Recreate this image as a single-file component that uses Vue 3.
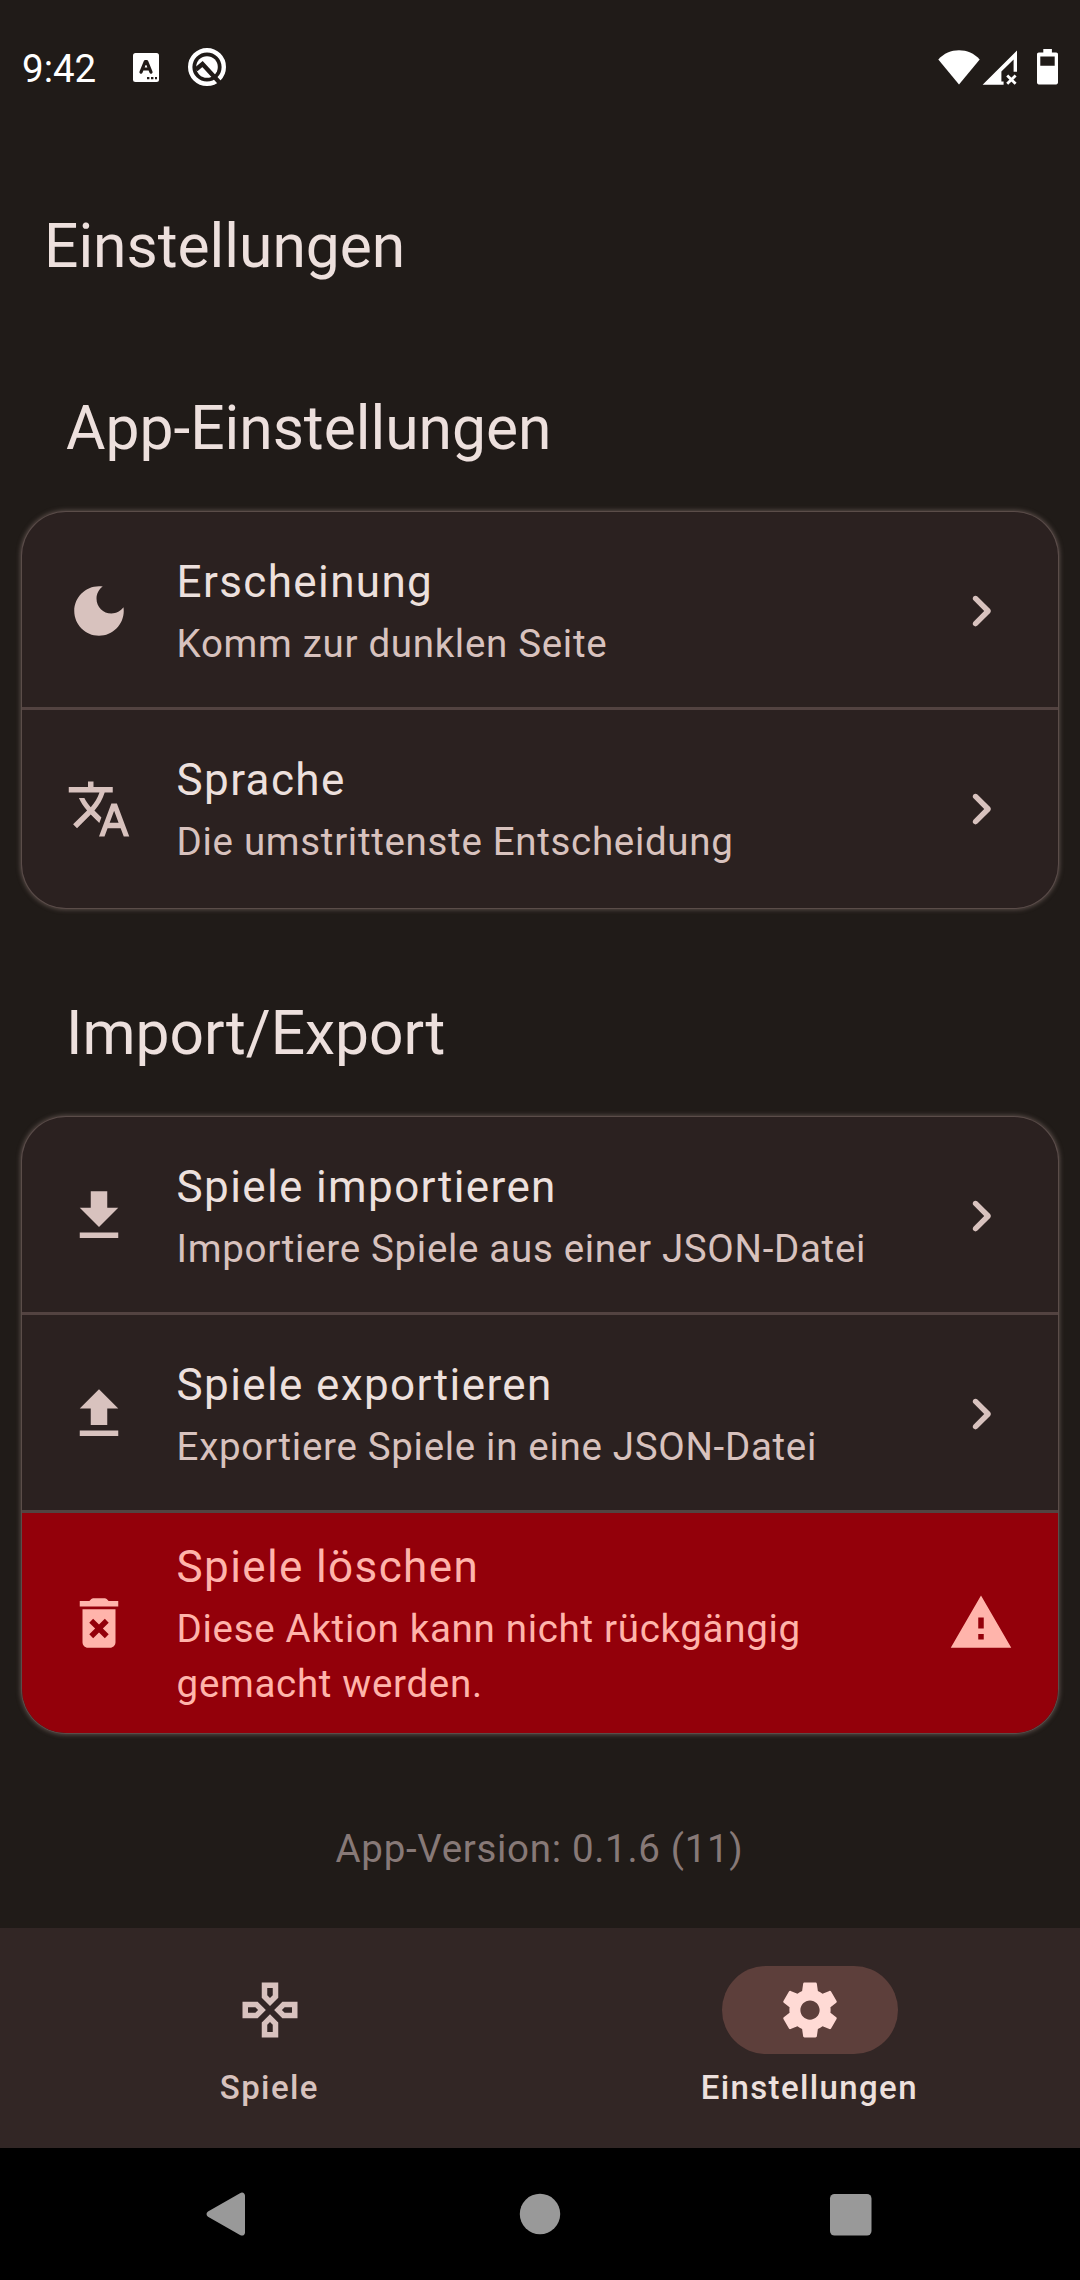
<script setup>
const icons = {
  moon: 'M12 3c-4.97 0-9 4.03-9 9s4.03 9 9 9 9-4.03 9-9c0-.46-.04-.92-.1-1.36-.98 1.37-2.58 2.26-4.4 2.26-2.98 0-5.4-2.42-5.4-5.4 0-1.81.89-3.42 2.26-4.4-.44-.06-.9-.1-1.36-.1z',
  translate: 'M12.87 15.07l-2.54-2.51.03-.03c1.74-1.94 2.98-4.17 3.71-6.53H17V4h-7V2H8v2H1v1.99h11.17C11.5 7.92 10.44 9.75 9 11.35 8.07 10.32 7.3 9.19 6.69 8h-2c.73 1.63 1.73 3.17 2.98 4.56l-5.09 5.02L4 19l5-5 3.11 3.11.76-2.04zM18.5 10h-2L12 22h2l1.12-3h4.75L21 22h2l-4.5-12zm-2.62 7l1.62-4.33L19.12 17h-3.24z',
  download: 'M19 9h-4V3H9v6H5l7 7 7-7zM5 18v2h14v-2H5z',
  upload: 'M9 16h6v-6h4l-7-7-7 7h4zm-4 2h14v2H5z',
  remove: 'M6 19c0 1.1.9 2 2 2h8c1.1 0 2-.9 2-2V7H6v12zm2.46-7.12l1.41-1.41L12 12.59l2.12-2.12 1.41 1.41L13.41 14l2.12 2.12-1.41 1.41L12 15.41l-2.12 2.12-1.41-1.41L10.59 14l-2.13-2.12zM15.5 4l-.7-.7c-.2-.2-.45-.3-.7-.3H9.9c-.25 0-.5.1-.7.3l-.7.7H5v2h14V4z',
  chevron: 'M9.29 15.88L13.17 12 9.29 8.12c-.39-.39-.39-1.02 0-1.41.39-.39 1.02-.39 1.41 0l4.59 4.59c.39.39.39 1.02 0 1.41L10.7 17.3c-.39.39-1.02.39-1.41 0-.38-.39-.39-1.03 0-1.42z',
  warning: 'M1 21h22L12 2 1 21zm12-3h-2v-2h2v2zm0-4h-2v-4h2v4z',
  gamepad: 'M13 4v2.67l-1 1-1-1V4h2m7 7v2h-2.67l-1-1 1-1H20M6.67 11l1 1-1 1H4v-2h2.67M12 16.33l1 1V20h-2v-2.67l1-1M15 2H9v5.5l3 3 3-3V2zm7 7h-5.5l-3 3 3 3H22V9zM7.5 9H2v6h5.5l3-3-3-3zm4.5 4.5l-3 3V22h6v-5.5l-3-3z',
  settings: 'M19.43 12.98c.04-.32.07-.64.07-.98s-.03-.66-.07-.98l2.11-1.65c.19-.15.24-.42.12-.64l-2-3.46c-.12-.22-.39-.3-.61-.22l-2.49 1c-.52-.4-1.08-.73-1.69-.98l-.38-2.65C14.46 2.18 14.25 2 14 2h-4c-.25 0-.46.18-.49.42l-.38 2.65c-.61.25-1.17.59-1.69.98l-2.49-1c-.23-.09-.49 0-.61.22l-2 3.46c-.13.22-.07.49.12.64l2.11 1.65c-.04.32-.07.65-.07.98s.03.66.07.98l-2.11 1.65c-.19.15-.24.42-.12.64l2 3.46c.12.22.39.3.61.22l2.49-1c.52.4 1.08.73 1.69.98l.38 2.65c.03.24.24.42.49.42h4c.25 0 .46-.18.49-.42l.38-2.65c.61-.25 1.17-.59 1.69-.98l2.49 1c.23.09.49 0 .61-.22l2-3.46c.12-.22.07-.49-.12-.64l-2.11-1.65zM12 15.5c-1.93 0-3.5-1.57-3.5-3.5s1.57-3.5 3.5-3.5 3.5 1.57 3.5 3.5-1.57 3.5-3.5 3.5z',
}

const sections = [
  {
    title: 'App-Einstellungen',
    rows: [
      { icon: 'moon', title: 'Erscheinung', text: 'Komm zur dunklen Seite', end: 'chevron' },
      { icon: 'translate', title: 'Sprache', text: 'Die umstrittenste Entscheidung', end: 'chevron' },
    ],
  },
  {
    title: 'Import/Export',
    rows: [
      { icon: 'download', title: 'Spiele importieren', text: 'Importiere Spiele aus einer JSON-Datei', end: 'chevron' },
      { icon: 'upload', title: 'Spiele exportieren', text: 'Exportiere Spiele in eine JSON-Datei', end: 'chevron' },
      { icon: 'remove', title: 'Spiele löschen', text: 'Diese Aktion kann nicht rückgängig gemacht werden.', end: 'warning', danger: true },
    ],
  },
]

const tabs = [
  { icon: 'gamepad', label: 'Spiele', active: false },
  { icon: 'settings', label: 'Einstellungen', active: true },
]
</script>

<template>
  <div class="screen">
    <header class="status">
      <span class="time">9:42</span>
      <svg class="st-a" width="26" height="29" viewBox="0 0 26 29">
        <rect width="26" height="29" rx="2.5" fill="#fff" />
        <path d="M8 19.200 12.300 8.600h1.400L18 19.200M9.800 16h6.400" fill="none" stroke="#211b18" stroke-width="3.200" stroke-linecap="round" stroke-linejoin="round" />
        <path d="M14 24h2.400v2.200H14zM18 24h2.400v2.200H18zM22 24h2v2.200h-2z" fill="#211b18" />
      </svg>
      <svg class="st-q" width="40" height="40" viewBox="0 0 40 40">
        <circle cx="20" cy="20" r="16.800" fill="none" stroke="#fff" stroke-width="4.400" />
        <circle cx="20" cy="20" r="10.800" fill="#fff" />
        <path d="M9 22.500 15.500 17 32.500 35.500" fill="none" stroke="#211b18" stroke-width="4.400" />
      </svg>
      <span class="grow"></span>
      <svg class="st-w" width="42" height="35" viewBox="0 0 42 35">
        <path d="M.3 9.600C6 3.200 13 .3 21 .3s15 2.900 20.700 9.300L21 34.600z" fill="#fff" />
      </svg>
      <svg class="st-s" width="36" height="36" viewBox="0 0 36 36">
        <path d="M.6 34.800 35 .4V21.800H31.600V9.400L19.400 21.600V31.500h2.200v3.300z" fill="#fff" />
        <path d="m25.200 25.400 8.400 8.400m0-8.400-8.400 8.400" stroke="#fff" stroke-width="2.800" />
      </svg>
      <svg class="st-b" width="21" height="36" viewBox="0 0 21 36">
        <path fill-rule="evenodd" d="M6.300 0h8.600v3.600h4.300c1 0 1.800.8 1.800 1.800v28.200c0 1-.8 1.800-1.800 1.800H1.800C.8 35.400 0 34.600 0 33.600V5.400c0-1 .8-1.800 1.800-1.800h4.500zM3.300 7.400v9.400h14.400V7.400z" fill="#fff" />
      </svg>
    </header>

    <main class="content">
      <h1>Einstellungen</h1>
      <section v-for="s in sections" :key="s.title">
        <h2>{{ s.title }}</h2>
        <div class="card">
          <div v-for="r in s.rows" :key="r.title" class="row" :class="{ danger: r.danger }">
            <svg class="icon" viewBox="0 0 24 24"><path :d="icons[r.icon]" /></svg>
            <div class="text">
              <div class="title">{{ r.title }}</div>
              <div class="sub">{{ r.text }}</div>
            </div>
            <svg class="icon" viewBox="0 0 24 24"><path :d="icons[r.end]" /></svg>
          </div>
        </div>
      </section>
      <p class="version">App-Version: 0.1.6 (11)</p>
    </main>

    <nav class="tabs">
      <div v-for="t in tabs" :key="t.label" class="tab" :class="{ active: t.active }">
        <span class="pill"><svg class="icon" viewBox="0 0 24 24"><path :d="icons[t.icon]" /></svg></span>
        <span class="label">{{ t.label }}</span>
      </div>
    </nav>

    <footer class="system">
      <svg width="1080" height="132" viewBox="0 0 1080 132" fill="#999">
        <path d="M208 63.500 240 45.200c2.500-1.500 5 0 5 2.600v36.600c0 2.600-2.500 4.100-5 2.600L208 68.700c-2-1.200-2-4 0-5.200z" />
        <circle cx="540" cy="66" r="20.200" />
        <rect x="830" y="46" width="41.500" height="41.500" rx="4.500" />
      </svg>
    </footer>
  </div>
</template>

<style>
body {
  margin: 0;
  background: #201a18;
}
</style>

<style scoped>
.screen {
  width: 1080px;
  height: 2280px;
  display: flex;
  flex-direction: column;
  overflow: hidden;
  background: #201b18;
  color: #ede0dd;
  font-family: Roboto, "Liberation Sans", sans-serif;
}
svg {
  display: block;
  flex: none;
}
.status {
  height: 136px;
  flex: none;
  display: flex;
  align-items: flex-start;
  padding: 0 22px;
  color: #fff;
}
.time {
  width: 111px;
  padding-top: 46px;
  font-size: 38.5px;
  line-height: 46px;
}
.st-a { margin-top: 53px; }
.st-q { margin: 47px 0 0 28px; }
.grow { flex: 1; }
.st-w { margin-top: 50px; }
.st-s { margin: 50px 0 0 2px; }
.st-b { margin: 49px 0 0 19px; }
.content {
  flex: 1;
  min-height: 0;
}
h1, h2 {
  margin: 0;
  font-size: 60.5px;
  line-height: 77px;
  font-weight: 400;
}
h1 {
  padding: 72px 44px 105px;
}
h2 {
  padding: 0 66px 45px;
}
.card {
  margin: 0 22px;
  border-radius: 44px;
  overflow: hidden;
  background: #2b2120;
  box-shadow: 0 0 0 1px rgba(110, 92, 89, 0.5), 0 0 4px 2px rgba(120, 103, 99, 0.62);
}
section + section {
  margin-top: 87px;
}
.row {
  box-sizing: border-box;
  min-height: 198px;
  display: flex;
  align-items: center;
  padding: 0 44px;
}
.row:not(:last-child) {
  box-shadow: inset 0 -3px #534341;
}
.icon {
  width: 66px;
  height: 66px;
  fill: currentColor;
}
.row .icon {
  color: #d8c2be;
}
.text {
  flex: 1;
  margin: -3px 43.4px 0 44.6px;
}
.title {
  font-size: 44px;
  line-height: 66px;
  letter-spacing: 1.375px;
}
.sub {
  margin-top: 1px;
  font-size: 38.5px;
  line-height: 55px;
  letter-spacing: 0.6875px;
  color: #d8c2be;
}
.danger {
  height: 220px;
  background: #93000a;
}
.danger .text {
  margin-top: -1px;
}
.danger .icon,
.danger .title,
.danger .sub {
  color: #ffb4ab;
}
.version {
  margin: 88px 0 0;
  padding-right: 1px;
  text-align: center;
  font-size: 38.5px;
  line-height: 55px;
  letter-spacing: 0.6875px;
  color: #877977;
}
.tabs {
  height: 220px;
  flex: none;
  display: flex;
  background: #322625;
}
.tab {
  flex: 1;
  display: flex;
  flex-direction: column;
  align-items: center;
  padding-top: 38px;
  color: #d8c2be;
}
.pill {
  width: 176px;
  height: 88px;
  border-radius: 44px;
  display: flex;
  align-items: center;
  justify-content: center;
}
.label {
  margin-top: 12px;
  padding-right: 1.4px;
  font-size: 33px;
  line-height: 44px;
  font-weight: 500;
  letter-spacing: 1.375px;
}
.active .pill {
  background: #5d3f3b;
  color: #ffdad5;
}
.active .label {
  color: #ede0dd;
}
.system {
  height: 132px;
  flex: none;
  background: #000;
}
</style>
